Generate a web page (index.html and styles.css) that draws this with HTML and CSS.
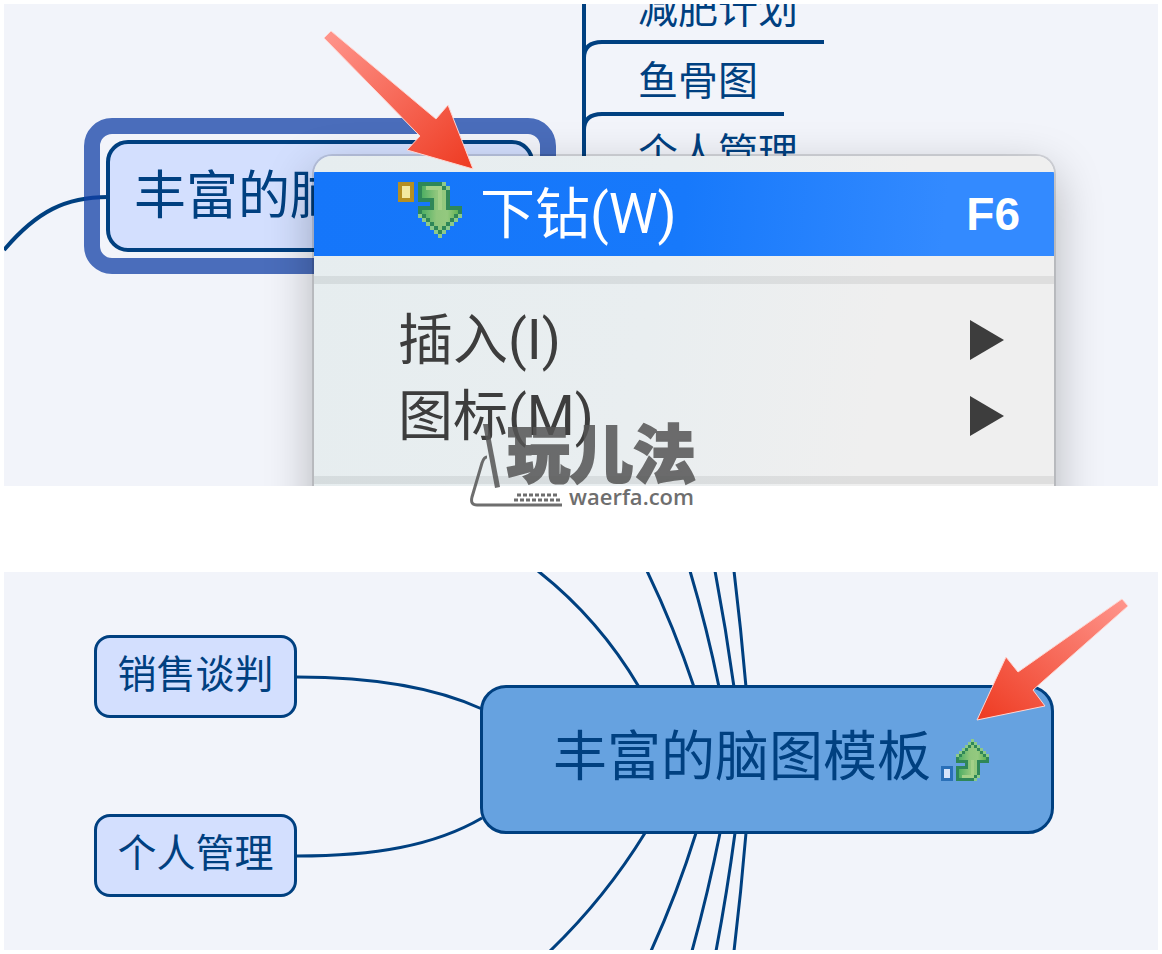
FILE: index.html
```html
<!DOCTYPE html>
<html lang="zh-CN">
<head>
  <meta charset="utf-8">
  <title>丰富的脑图模板</title>
  <link rel="stylesheet" href="styles.css">
</head>
<body>

<!-- shared shapes -->
<svg class="defs" width="0" height="0" aria-hidden="true">
  <defs>
    <linearGradient id="green" x1="0" y1="0" x2="1" y2="0">
      <stop offset="0" stop-color="#4fae63"/>
      <stop offset="0.4" stop-color="#8fc67c"/>
      <stop offset="0.7" stop-color="#94c97f"/>
      <stop offset="1" stop-color="#62b455"/>
    </linearGradient>
    <linearGradient id="redDown" x1="0" y1="0" x2="1" y2="1">
      <stop offset="0" stop-color="#ff968d"/>
      <stop offset="1" stop-color="#ee3a21"/>
    </linearGradient>
    <linearGradient id="redLeft" x1="1" y1="0" x2="0" y2="1">
      <stop offset="0" stop-color="#ff968d"/>
      <stop offset="1" stop-color="#ee3a21"/>
    </linearGradient>
    <symbol id="bentArrow" viewBox="0 0 16 14">
      <path fill="#2f8758" d="M5 0h6v1h1v1h1v4h3v2h-1v1h-1v1h-1v1h-1v1h-1v1h-1v-1h-1v-1h-1v-1h-1v-1h-1v-1h-1v-2h3v-1h-3z"/>
      <path fill="url(#green)" d="M6 1h5v1h1v5h3v1h-1v1h-1v1h-1v1h-1v1h-1v-1h-1v-1h-1v-1h-1v-1h-1v-1h3v-3h-3z"/>
      <path fill="#a3d088" d="M7 1h4v1h-4zM10 2h1v5h-1z"/>
      <path fill="#8cc98a" d="M11 0h1v1h-1zM12 1h1v1h-1zM5 8h1v1h-1zM6 9h1v1h-1zM7 10h1v1h-1zM8 11h1v1h-1zM9 12h1v1h-1zM10 13h1v1h-1zM11 12h1v1h-1zM12 11h1v1h-1zM13 10h1v1h-1zM14 9h1v1h-1zM15 8h1v1h-1z"/>
    </symbol>
  </defs>
</svg>

<main class="page">
  <figure class="shot">
    <div class="canvas canvas-menu">
      <svg class="lines" width="1154" height="482">
        <path class="thick" d="M0 246C33 207 62 193 104 193"/>
        <path class="thick" d="M580 0V160"/>
        <path class="thick" d="M580 54Q580 38 598 38H820"/>
        <path class="thick" d="M580 126Q580 110 598 110H780"/>
      </svg>

      <div class="selected">
        <div class="topic">丰富的脑图模板</div>
      </div>

      <ul class="subtopics">
        <li>减肥计划</li>
        <li>鱼骨图</li>
        <li>个人管理</li>
      </ul>

      <div class="menu" role="menu">
        <div class="menu-group">
          <button class="menu-item active" type="button" role="menuitem">
            <svg class="drill-icon" viewBox="0 0 16 14" width="64" height="56">
              <path fill="#b58f22" d="M0 0h4v5h-4z"/>
              <path fill="#f3e9a0" d="M1 1h2v3h-2z"/>
              <use href="#bentArrow" width="16" height="14"/>
            </svg>
            <span class="label">下钻(W)</span>
            <span class="key">F6</span>
          </button>
        </div>
        <div class="menu-group">
          <button class="menu-item" type="button" role="menuitem">
            <span class="label">插入(I)</span>
            <svg class="more" width="34" height="40"><path d="M0 0L34 20L0 40z"/></svg>
          </button>
          <button class="menu-item" type="button" role="menuitem">
            <span class="label">图标(M)</span>
            <svg class="more" width="34" height="40"><path d="M0 0L34 20L0 40z"/></svg>
          </button>
        </div>
        <div class="menu-group"></div>
      </div>

      <svg class="lines" width="1154" height="482">
        <path class="pointer" fill="url(#redDown)" d="M320 34L327 27L432 115L444 101L469 165L403 146L416 132z"/>
      </svg>
    </div>

    <div class="watermark">
      <svg class="watermark-logo" width="96" height="90" viewBox="0 0 96 90">
        <path d="M15 6L20 6L32 69L27 70z"/>
        <path class="edge" d="M19 39Q16 39 14 45L4 79Q2 87 9 87H94"/>
        <path class="keys" d="M49 77H89M46 82H92"/>
      </svg>
      <span class="watermark-name">玩儿法</span>
      <span class="watermark-url">waerfa.com</span>
    </div>
  </figure>

  <figure class="shot">
    <div class="canvas canvas-map">
      <svg class="lines" width="1154" height="378">
        <path d="M293 105C370 105 430 115 478 137"/>
        <path d="M293 284C370 284 430 274 478 246"/>
        <path d="M534 -1Q595 47 635 115"/>
        <path d="M643 -1Q670 55 690 115"/>
        <path d="M686 -1Q703 56 715 115"/>
        <path d="M711 -1Q722 57 730 115"/>
        <path d="M730 -1Q737 57 742 115"/>
        <path d="M641 261Q601 326 546 379"/>
        <path d="M692 261Q673 322 647 379"/>
        <path d="M716 261Q704 321 688 379"/>
        <path d="M731 261Q723 321 712 379"/>
        <path d="M742 261Q737 321 730 379"/>
      </svg>

      <div class="node node-sales">销售谈判</div>
      <div class="node node-personal">个人管理</div>
      <div class="node-center">
        <span class="center-title">丰富的脑图模板</span>
        <svg viewBox="0 0 16 14" width="48" height="42">
          <path fill="#2a70b8" d="M0 9h4v5h-4z"/>
          <path fill="#d5e4fb" d="M1 10h2v3h-2z"/>
          <g transform="matrix(1 0 0 -1 0 14)"><use href="#bentArrow" width="16" height="14"/></g>
        </svg>
      </div>

      <svg class="lines" width="1154" height="378">
        <path class="pointer" fill="url(#redLeft)" d="M1118 27L1124 34L1029 118L1041 134L973 148L1002 85L1014 100z"/>
      </svg>
    </div>
  </figure>
</main>

</body>
</html>
```

FILE: styles.css
```css
body {
  margin: 0;
  background: #fff;
  color: #004080;
  font-family: "Noto Sans CJK SC", sans-serif;
}

.defs {
  position: absolute;
}

.page {
  display: flex;
  flex-direction: column;
  gap: 86px;
  padding: 4px;
}

.shot {
  position: relative;
  margin: 0;
}

.canvas {
  position: relative;
  overflow: hidden;
  background: #f2f4fa;
}

.canvas-menu {
  height: 482px;
}

.canvas-map {
  height: 378px;
}

.lines {
  position: absolute;
  left: 0;
  top: 0;
  fill: none;
  stroke: #004080;
  stroke-width: 3;
  pointer-events: none;
}

.lines .thick {
  stroke-width: 4;
}

.lines .pointer {
  stroke: #ffd5d0;
  stroke-width: 1;
}

/* first map */
.selected {
  position: absolute;
  left: 80px;
  top: 114px;
  padding: 6px;
  border: 16px solid rgba(18, 64, 165, 0.75);
  border-radius: 28px;
}

.topic {
  box-sizing: border-box;
  width: 428px;
  height: 112px;
  padding: 18px 24px;
  border: 4px solid #004080;
  border-radius: 22px;
  background: #d3dffe;
  font-size: 52px;
  line-height: 60px;
  white-space: nowrap;
}

.subtopics {
  position: absolute;
  left: 634px;
  top: -34px;
  margin: 0;
  padding: 0;
  list-style: none;
  font-size: 40px;
  line-height: 72px;
}

/* context menu */
.menu {
  position: absolute;
  left: 310px;
  top: 152px;
  width: 740px;
  overflow: hidden;
  border-radius: 18px 18px 0 0;
  background: linear-gradient(100deg, #e6edef 0%, #e9eef0 45%, #efefef 75%);
  box-shadow: 0 0 0 2px rgba(0, 0, 0, 0.12), 0 16px 48px rgba(0, 0, 0, 0.28);
}

.menu-group {
  padding: 18px 0 22px;
}

.menu-group:first-child {
  padding: 16px 0 20px;
}

.menu-group + .menu-group {
  border-top: 8px solid rgba(0, 0, 0, 0.07);
}

.menu-item {
  display: flex;
  align-items: center;
  width: 100%;
  height: 76px;
  padding: 0 34px 0 84px;
  border: none;
  background: none;
  color: #3d3d3d;
  font-family: Roboto, "Noto Sans CJK SC", sans-serif;
  font-size: 55px;
  line-height: 56px;
  text-align: left;
}

.menu-item.active {
  height: 84px;
  background: linear-gradient(95deg, #1576fa 0%, #1779fb 50%, #338aff 85%);
  color: #fff;
}

.label {
  flex: 1;
}

.drill-icon {
  margin-right: 18px;
  margin-bottom: 8px;
}

.key {
  font-family: "Liberation Sans", sans-serif;
  font-size: 46px;
  font-weight: bold;
}

.more {
  margin-right: 16px;
  fill: #3d3d3d;
}

/* watermark */
.watermark {
  position: absolute;
  left: 464px;
  top: 414px;
  display: flex;
  flex-direction: column;
  align-items: flex-end;
  width: 228px;
  color: #555;
  opacity: 0.85;
}

.watermark-logo {
  position: absolute;
  left: 0;
  top: 0;
  fill: #555;
}

.watermark-logo .edge {
  fill: none;
  stroke: #555;
  stroke-width: 3;
}

.watermark-logo .keys {
  stroke: #555;
  stroke-width: 3;
  stroke-dasharray: 4 2;
}

.watermark-name {
  font-size: 63px;
  font-weight: 900;
  line-height: 64px;
  -webkit-text-stroke: 2px #555;
}

.watermark-url {
  margin: 2px 2px 0 0;
  font-family: "Open Sans", sans-serif;
  font-size: 22px;
  font-weight: 600;
  line-height: 24px;
}

/* second map */
.node {
  position: absolute;
  left: 90px;
  box-sizing: border-box;
  width: 203px;
  height: 83px;
  padding: 10px 0;
  border: 3px solid #004080;
  border-radius: 16px;
  background: #d3dffe;
  font-size: 39px;
  line-height: 46px;
  text-align: center;
}

.node-sales {
  top: 63px;
}

.node-personal {
  top: 242px;
}

.node-center {
  position: absolute;
  left: 476px;
  top: 113px;
  box-sizing: border-box;
  display: flex;
  align-items: center;
  gap: 10px;
  width: 574px;
  height: 149px;
  padding-left: 70px;
  border: 3px solid #004080;
  border-radius: 26px;
  background: #66a2e0;
}

.center-title {
  padding-bottom: 14px;
  font-size: 54px;
  line-height: 60px;
  white-space: nowrap;
}
```
